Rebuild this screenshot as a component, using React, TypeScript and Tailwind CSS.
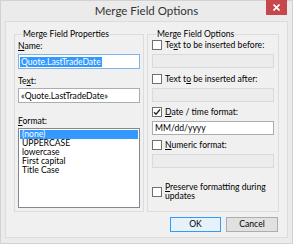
import React from 'react';

const FONT = { fontFamily: 'Lato, "Liberation Sans", sans-serif' };

const Acc: React.FC<{ children: React.ReactNode }> = ({ children }) => (
  <span className="underline underline-offset-[1px]">{children}</span>
);

const CheckBox: React.FC<{ checked?: boolean }> = ({ checked }) => (
  <span className="w-[10px] h-[10px] shrink-0 border border-[#707070] bg-white flex items-center justify-center">
    {checked && (
      <svg width="8" height="8" viewBox="0 0 8 8">
        <path d="M1 4.2 L3 6.2 L7 1.5" fill="none" stroke="#222" strokeWidth="1.3" />
      </svg>
    )}
  </span>
);

const DisabledBox = () => (
  <div className="h-[14px] border border-[#d9d9d9] bg-[#ececec]" />
);

const formats = ['(none)', 'UPPERCASE', 'lowercase', 'First capital', 'Title Case'];

export default function App() {
  return (
    <div
      className="w-[293px] h-[244px] bg-[#ebebeb] border border-[#d2d2d2] flex flex-col text-[8.6px] leading-[10px] text-black"
      style={FONT}
    >
      {/* title bar */}
      <div className="relative h-[20px] shrink-0 flex items-center justify-center text-[11.5px] text-[#333]">
        Merge Field Options
        <div className="absolute top-[-1px] right-[5px] w-[21px] h-[15px] bg-[#c7484c] flex items-center justify-center">
          <svg width="7" height="7" viewBox="0 0 7 7">
            <path d="M0.5 0.5 L6.5 6.5 M6.5 0.5 L0.5 6.5" stroke="#fff" strokeWidth="1.6" />
          </svg>
        </div>
      </div>

      {/* client area */}
      <div className="mx-[4px] h-[217px] border border-[#dcdcdc] bg-[#f0f0f0] pt-[7px] px-[8px] flex flex-col">
        <div className="flex gap-[3px] h-[183px]">
          {/* left group */}
          <fieldset className="w-[131px] border border-[#dcdcdc] px-[3px] flex flex-col">
            <legend className="ml-[4px] px-[1px] leading-[10px]">Merge Field Properties</legend>
            <div className="mt-[2px]"><Acc>N</Acc>ame:</div>
            <div className="mt-[3px] h-[15px] border border-[#7eb4ea] bg-white px-[1px] flex items-center">
              <span className="bg-[#3399ff] text-white px-[1px]">Quote.LastTradeDate</span>
            </div>
            <div className="mt-[7px]">Te<Acc>x</Acc>t:</div>
            <div className="mt-[2px] h-[15px] border border-[#abadb3] bg-white px-[2px] flex items-center">
              «Quote.LastTradeDate»
            </div>
            <div className="mt-[13px]"><Acc>F</Acc>ormat:</div>
            <div className="mt-[2px] h-[80px] border border-[#828790] bg-white p-[1px]">
              {formats.map((f, i) => (
                <div
                  key={f}
                  className={`h-[9px] leading-[9px] px-[2px] ${i === 0 ? 'bg-[#3399ff] text-white' : ''}`}
                >
                  {f}
                </div>
              ))}
            </div>
          </fieldset>

          {/* right group */}
          <fieldset className="w-[133px] border border-[#dcdcdc] px-[4px] flex flex-col whitespace-nowrap">
            <legend className="ml-[4px] px-[1px] leading-[10px]">Merge Field Options</legend>
            <div className="mt-[1px] flex items-center gap-[3px]">
              <CheckBox />
              <span>Te<Acc>x</Acc>t to be inserted before:</span>
            </div>
            <div className="mt-[4px]"><DisabledBox /></div>
            <div className="mt-[6px] flex items-center gap-[3px]">
              <CheckBox />
              <span>Text t<Acc>o</Acc> be inserted after:</span>
            </div>
            <div className="mt-[4px]"><DisabledBox /></div>
            <div className="mt-[5px] flex items-center gap-[3px]">
              <CheckBox checked />
              <span><Acc>D</Acc>ate / time format:</span>
            </div>
            <div className="mt-[4px] h-[14px] border border-[#abadb3] bg-white px-[2px] flex items-center">
              MM/dd/yyyy
            </div>
            <div className="mt-[5px] flex items-center gap-[3px]">
              <CheckBox />
              <span><Acc>N</Acc>umeric format:</span>
            </div>
            <div className="mt-[4px]"><DisabledBox /></div>
            <div className="mt-[15px] flex items-center gap-[3px]">
              <CheckBox />
              <span className="leading-[9px]"><Acc>P</Acc>reserve formatting during<br />updates</span>
            </div>
          </fieldset>
        </div>

        <div className="mt-[5px] flex justify-end gap-[5px] pr-[1px]">
          <button className="w-[51px] h-[15px] border border-[#3399ff] bg-[#e5f1fb] text-[8.6px] leading-[13px]">
            OK
          </button>
          <button className="w-[52px] h-[15px] border border-[#adadad] bg-[#e1e1e1] text-[8.6px] leading-[13px]">
            Cancel
          </button>
        </div>
      </div>
    </div>
  );
}
